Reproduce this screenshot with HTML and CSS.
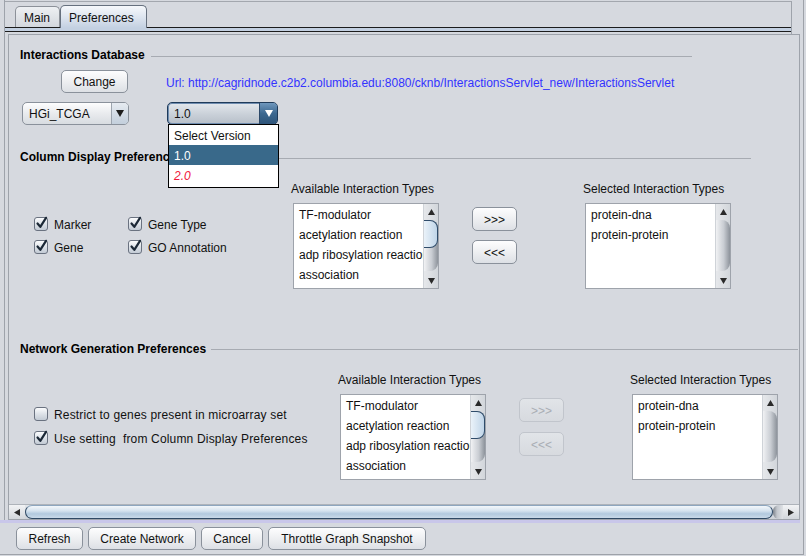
FILE: index.html
```html
<!DOCTYPE html>
<html>
<head>
<meta charset="utf-8">
<title>Preferences</title>
<link rel="stylesheet" href="styles.css">
</head>
<body>
<div class="app">
  <div class="frame">
    <div class="tabhead">
      <div class="tabs">
        <div class="tab tab-main">Main</div>
        <div class="tab tab-sel">Preferences</div>
      </div>
      <div class="strip"></div>
    </div>
    <div class="scrollpane">
      <div class="viewport">
        <section class="sec sec-db">
          <div class="sechead"><span>Interactions Database</span></div>
          <div class="row-change">
            <button class="btn btn-change">Change</button>
            <span class="url">Url: http://cagridnode.c2b2.columbia.edu:8080/cknb/InteractionsServlet_new/InteractionsServlet</span>
          </div>
          <div class="row-combo">
            <div class="combo combo-db">
              <span class="combo-text">HGi_TCGA</span>
              <span class="combo-btn"><svg width="8" height="7" viewBox="0 0 8 7"><path d="M0 0H8L4 7Z" fill="#1e1e1e"/></svg></span>
            </div>
            <div class="combo-wrap">
              <div class="combo combo-ver">
                <span class="combo-text">1.0</span>
                <span class="combo-btn"><svg width="8" height="7" viewBox="0 0 8 7"><path d="M0 0H8L4 7Z" fill="#ffffff"/></svg></span>
              </div>
              <ul class="popup">
                <li>Select Version</li>
                <li class="hl">1.0</li>
                <li class="red">2.0</li>
              </ul>
            </div>
          </div>
        </section>

        <section class="sec sec-col">
          <div class="sechead"><span>Column Display Preferences</span></div>
          <div class="secbody">
            <div class="checks">
              <label class="cb"><span class="box"><svg width="13" height="14" viewBox="0 0 13 14"><path d="M2.5 7.5L5.3 10.8L11 1.8" fill="none" stroke="#1b2836" stroke-width="2.2" stroke-linecap="round" stroke-linejoin="round"/></svg></span><span class="cbt">Marker</span></label>
              <label class="cb"><span class="box"><svg width="13" height="14" viewBox="0 0 13 14"><path d="M2.5 7.5L5.3 10.8L11 1.8" fill="none" stroke="#1b2836" stroke-width="2.2" stroke-linecap="round" stroke-linejoin="round"/></svg></span><span class="cbt">Gene Type</span></label>
              <label class="cb"><span class="box"><svg width="13" height="14" viewBox="0 0 13 14"><path d="M2.5 7.5L5.3 10.8L11 1.8" fill="none" stroke="#1b2836" stroke-width="2.2" stroke-linecap="round" stroke-linejoin="round"/></svg></span><span class="cbt">Gene</span></label>
              <label class="cb"><span class="box"><svg width="13" height="14" viewBox="0 0 13 14"><path d="M2.5 7.5L5.3 10.8L11 1.8" fill="none" stroke="#1b2836" stroke-width="2.2" stroke-linecap="round" stroke-linejoin="round"/></svg></span><span class="cbt">GO Annotation</span></label>
            </div>
            <div class="col">
              <div class="collabel">Available Interaction Types</div>
              <div class="list">
                <ul class="items">
                  <li>TF-modulator</li>
                  <li>acetylation reaction</li>
                  <li>adp ribosylation reaction</li>
                  <li>association</li>
                </ul>
                <div class="vscroll">
                  <div class="varrow"><svg width="7" height="6" viewBox="0 0 7 6"><path d="M0 6H7L3.5 0Z" fill="#2a2a2a"/></svg></div>
                  <div class="vtrack"><div class="vthumb vthumb-blue"></div></div>
                  <div class="varrow"><svg width="7" height="6" viewBox="0 0 7 6"><path d="M0 0H7L3.5 6Z" fill="#2a2a2a"/></svg></div>
                </div>
              </div>
            </div>
            <div class="movebtns">
              <button class="btn btn-move">&gt;&gt;&gt;</button>
              <button class="btn btn-move">&lt;&lt;&lt;</button>
            </div>
            <div class="col col-sel">
              <div class="collabel">Selected Interaction Types</div>
              <div class="list">
                <ul class="items">
                  <li>protein-dna</li>
                  <li>protein-protein</li>
                </ul>
                <div class="vscroll">
                  <div class="varrow"><svg width="7" height="6" viewBox="0 0 7 6"><path d="M0 6H7L3.5 0Z" fill="#2a2a2a"/></svg></div>
                  <div class="vtrack"><div class="vthumb"></div></div>
                  <div class="varrow"><svg width="7" height="6" viewBox="0 0 7 6"><path d="M0 0H7L3.5 6Z" fill="#2a2a2a"/></svg></div>
                </div>
              </div>
            </div>
          </div>
        </section>

        <section class="sec sec-net">
          <div class="sechead"><span>Network Generation Preferences</span></div>
          <div class="secbody">
            <div class="checks">
              <label class="cb"><span class="box"></span><span class="cbt">Restrict to genes present in microarray set</span></label>
              <label class="cb"><span class="box"><svg width="13" height="14" viewBox="0 0 13 14"><path d="M2.5 7.5L5.3 10.8L11 1.8" fill="none" stroke="#1b2836" stroke-width="2.2" stroke-linecap="round" stroke-linejoin="round"/></svg></span><span class="cbt">Use setting&nbsp; from Column Display Preferences</span></label>
            </div>
            <div class="col">
              <div class="collabel">Available Interaction Types</div>
              <div class="list">
                <ul class="items">
                  <li>TF-modulator</li>
                  <li>acetylation reaction</li>
                  <li>adp ribosylation reaction</li>
                  <li>association</li>
                </ul>
                <div class="vscroll">
                  <div class="varrow"><svg width="7" height="6" viewBox="0 0 7 6"><path d="M0 6H7L3.5 0Z" fill="#2a2a2a"/></svg></div>
                  <div class="vtrack"><div class="vthumb vthumb-blue"></div></div>
                  <div class="varrow"><svg width="7" height="6" viewBox="0 0 7 6"><path d="M0 0H7L3.5 6Z" fill="#2a2a2a"/></svg></div>
                </div>
              </div>
            </div>
            <div class="movebtns">
              <button class="btn btn-move btn-dis">&gt;&gt;&gt;</button>
              <button class="btn btn-move btn-dis">&lt;&lt;&lt;</button>
            </div>
            <div class="col col-sel">
              <div class="collabel">Selected Interaction Types</div>
              <div class="list">
                <ul class="items">
                  <li>protein-dna</li>
                  <li>protein-protein</li>
                </ul>
                <div class="vscroll">
                  <div class="varrow"><svg width="7" height="6" viewBox="0 0 7 6"><path d="M0 6H7L3.5 0Z" fill="#2a2a2a"/></svg></div>
                  <div class="vtrack"><div class="vthumb"></div></div>
                  <div class="varrow"><svg width="7" height="6" viewBox="0 0 7 6"><path d="M0 0H7L3.5 6Z" fill="#2a2a2a"/></svg></div>
                </div>
              </div>
            </div>
          </div>
        </section>
      </div>
      <div class="hscroll">
        <div class="harrow"><svg width="6" height="7" viewBox="0 0 6 7"><path d="M6 0V7L0 3.5Z" fill="#2a2a2a"/></svg></div>
        <div class="htrack"><div class="hthumb"></div><div class="hrest"></div></div>
        <div class="harrow"><svg width="6" height="7" viewBox="0 0 6 7"><path d="M0 0V7L6 3.5Z" fill="#2a2a2a"/></svg></div>
      </div>
    </div>
  </div>
  <div class="sep"></div>
  <div class="buttonbar">
    <button class="btn bb-refresh">Refresh</button>
    <button class="btn bb-create">Create Network</button>
    <button class="btn bb-cancel">Cancel</button>
    <button class="btn bb-throttle">Throttle Graph Snapshot</button>
  </div>
</div>
</body>
</html>
```
FILE: styles.css
```css
* { box-sizing: border-box; margin: 0; padding: 0; }
html, body { background: #d6d9df; }
body { margin: 0; font-family: "Liberation Sans", Arial, sans-serif; font-size: 12px; color: #000; }
ul { list-style: none; }
button { font: inherit; color: inherit; cursor: default; }

.app { width: 804px; height: 555px; border-right: 1px solid #9ea2a9; border-bottom: 1px solid #9ea2a9; overflow: hidden; }

.frame { margin-left: 4px; border-left: 1px solid #9ea3ab; height: 520px; display: flex; flex-direction: column; }

.tabhead { margin-top: 1px; width: 787px; height: 33px; flex: none; border-top: 1px solid #a3a7ae; border-right: 1px solid #9ea3ab; }
.tabs { height: 25px; display: flex; align-items: flex-end; padding-left: 10px; }
.tab { height: 21px; padding: 1px 0 0 8px; line-height: 20px; border: 1px solid #8c9199; border-bottom: none; border-radius: 5px 5px 0 0; background: linear-gradient(#eef0f3, #d3d7dd); color: #111; white-space: nowrap; }
.tab-main { width: 45px; }
.tab-sel { width: 87px; height: 23px; margin-bottom: -1px; position: relative; z-index: 1; line-height: 22px; border-color: #66707e; background: linear-gradient(#f6f8fb, #dbe3ee 55%, #c3d0e1); }
.strip { height: 5px; border-top: 1px solid #1c1c1c; border-bottom: 1px solid #1c1c1c; background: #c3d0e1; }

.scrollpane { margin-left: 3px; width: 792px; height: 486px; flex: none; border: 1px solid #9ea3ab; display: flex; flex-direction: column; }
.viewport { flex: 1; overflow: hidden; }

.sec { padding-left: 11px; }
.sechead { display: flex; align-items: center; height: 15px; line-height: 15px; font-weight: bold; white-space: nowrap; }
.sechead span { padding-top: 2px; }
.sechead::after { content: ""; flex: 1; height: 1px; margin: 3px 0 0 6px; background: #a7abb2; }
.sec-db .sechead { width: 672px; margin-top: 12px; }
.sec-col .sechead { width: 731px; margin-top: 24px; }
.sec-net .sechead { width: 778px; margin-top: 52px; }
.sec-net .sechead::after { margin-top: 1px; margin-left: 5px; }

.btn { height: 23px; padding-top: 2px; border: 1px solid #8a919b; border-radius: 5px; background: linear-gradient(#fdfdfe 0%, #f1f2f4 40%, #dde0e5 100%); text-align: center; line-height: 19px; color: #111; white-space: nowrap; }
.btn-dis { color: #a9adb4; border-color: #c1c5cc; background: linear-gradient(#e1e4e8, #d7dadf); }

.row-change { display: flex; align-items: center; height: 23px; margin-top: 8px; }
.btn-change { margin-left: 41px; width: 67px; }
.url { margin-left: 38px; padding-top: 2px; color: #3333ff; white-space: nowrap; }

.row-combo { display: flex; height: 23px; margin-top: 9px; }
.combo { display: flex; height: 23px; border: 1px solid #8a919b; border-radius: 5px; overflow: hidden; background: linear-gradient(#fdfdfe, #e9ebee 50%, #d8dce1); }
.combo-text { flex: 1; padding: 1px 0 0 6px; line-height: 21px; color: #111; white-space: nowrap; }
.combo-btn { width: 17px; display: flex; align-items: center; justify-content: center; border-left: 1px solid #9ca4ae; background: linear-gradient(#e6ebf1, #c3cfdc); }
.combo-db { margin-left: 2px; width: 107px; }
.combo-wrap { position: relative; margin-left: 38px; }
.combo-ver { width: 111px; border-color: #1f3b5a; box-shadow: inset 0 0 0 1px #6f8db0; background: linear-gradient(#e4e8ed, #c9d0d8 55%, #b7bfc9); }
.combo-ver .combo-btn { width: 18px; border-left-color: #2b4868; background: linear-gradient(#6f97bd, #3c6890 50%, #2d5479); }

.popup { position: absolute; top: 22px; left: 1px; width: 111px; border: 1px solid #000; background: #fff; z-index: 10; padding-bottom: 1px; }
.popup li { height: 20px; padding: 1px 0 0 5px; line-height: 20px; color: #111; white-space: nowrap; }
.popup .hl { background: #39698a; color: #fff; }
.popup .red { color: #f0163a; font-style: italic; height: 21px; }

.secbody { display: flex; align-items: flex-start; }
.sec-col .secbody { margin-top: 17px; }
.sec-net .secbody { margin-top: 16px; }
.checks { margin-left: 14px; }
.sec-col .checks { width: 257px; margin-top: 36px; display: grid; grid-template-columns: 94px auto; row-gap: 9px; }
.sec-net .checks { width: 304px; margin-top: 35px; display: flex; flex-direction: column; gap: 10px; letter-spacing: 0.17px; }
.cb { display: flex; align-items: center; gap: 6px; height: 14px; line-height: 14px; white-space: nowrap; color: #111; }
.cbt { padding-top: 2px; }
.box { flex: none; width: 14px; height: 14px; border: 1px solid #6a7280; border-radius: 3px; background: linear-gradient(#fbfcfd, #dde2e8 50%, #c3cbd5); position: relative; }
.box svg { position: absolute; left: 0; top: -2px; }

.col { width: 148px; flex: none; }
.col-sel { margin-left: 66px; }
.collabel { height: 15px; padding-top: 1px; line-height: 15px; margin-bottom: 7px; white-space: nowrap; color: #111; }
.list { margin-left: 2px; width: 146px; height: 86px; border: 1px solid #9ea3ab; background: #fff; display: flex; }
.items { flex: 1; overflow: hidden; white-space: nowrap; padding-left: 5px; color: #111; }
.items li { height: 20px; padding-top: 1px; line-height: 20px; }
.vscroll { width: 15px; flex: none; display: flex; flex-direction: column; border-left: 1px solid #cfd3d8; background: linear-gradient(to right, #e6e8eb, #d2d6db); }
.varrow { height: 15px; display: flex; align-items: center; justify-content: center; }
.vtrack { flex: 1; position: relative; }
.vthumb { position: absolute; left: 0; right: 0; top: 1px; bottom: 2px; border-radius: 0 8px 8px 0; background: linear-gradient(to right, #f1f2f4, #c9cdd3 55%, #8d939b); }
.vthumb-blue::before { content: ""; position: absolute; left: 0; right: 0; top: 0; height: 50%; border: 1px solid #2f4c6a; border-left: none; border-radius: 0 8px 8px 0; background: linear-gradient(to right, #eaf2f9, #c0d5e8); }

.movebtns { margin-left: 33px; width: 45px; flex: none; display: flex; flex-direction: column; margin-top: 26px; }
.sec-col .movebtns { gap: 9px; }
.sec-net .movebtns { gap: 10px; }
.btn-move { width: 45px; height: 24px; line-height: 20px; }

.hscroll { height: 15px; flex: none; display: flex; border-top: 1px solid #aeb3ba; background: linear-gradient(#e2e5e9, #cfd3d9); }
.harrow { width: 16px; flex: none; display: flex; align-items: center; justify-content: center; background: linear-gradient(#f2f3f5, #d2d6db); }
.htrack { flex: 1; display: flex; }
.hthumb { width: 748px; height: 14px; border: 1px solid #2f4964; border-top-color: #8da6bf; border-radius: 8px; background: linear-gradient(#f3f7fb, #d6e3ef 40%, #b2c9de 65%, #c9d9e8); }
.hrest { flex: 1; background: linear-gradient(to right, #7d838b, #c2c6cc 40%, #dfe2e6); border-radius: 6px 0 0 6px; }

.sep { width: 800px; height: 3px; background: #c9c7ea; }
.buttonbar { display: flex; gap: 5px; padding: 4px 0 0 16px; height: 31px; }
.buttonbar .btn { height: 23px; }
.bb-refresh { width: 67px; }
.bb-create { width: 108px; }
.bb-cancel { width: 62px; }
.bb-throttle { width: 158px; }
```
